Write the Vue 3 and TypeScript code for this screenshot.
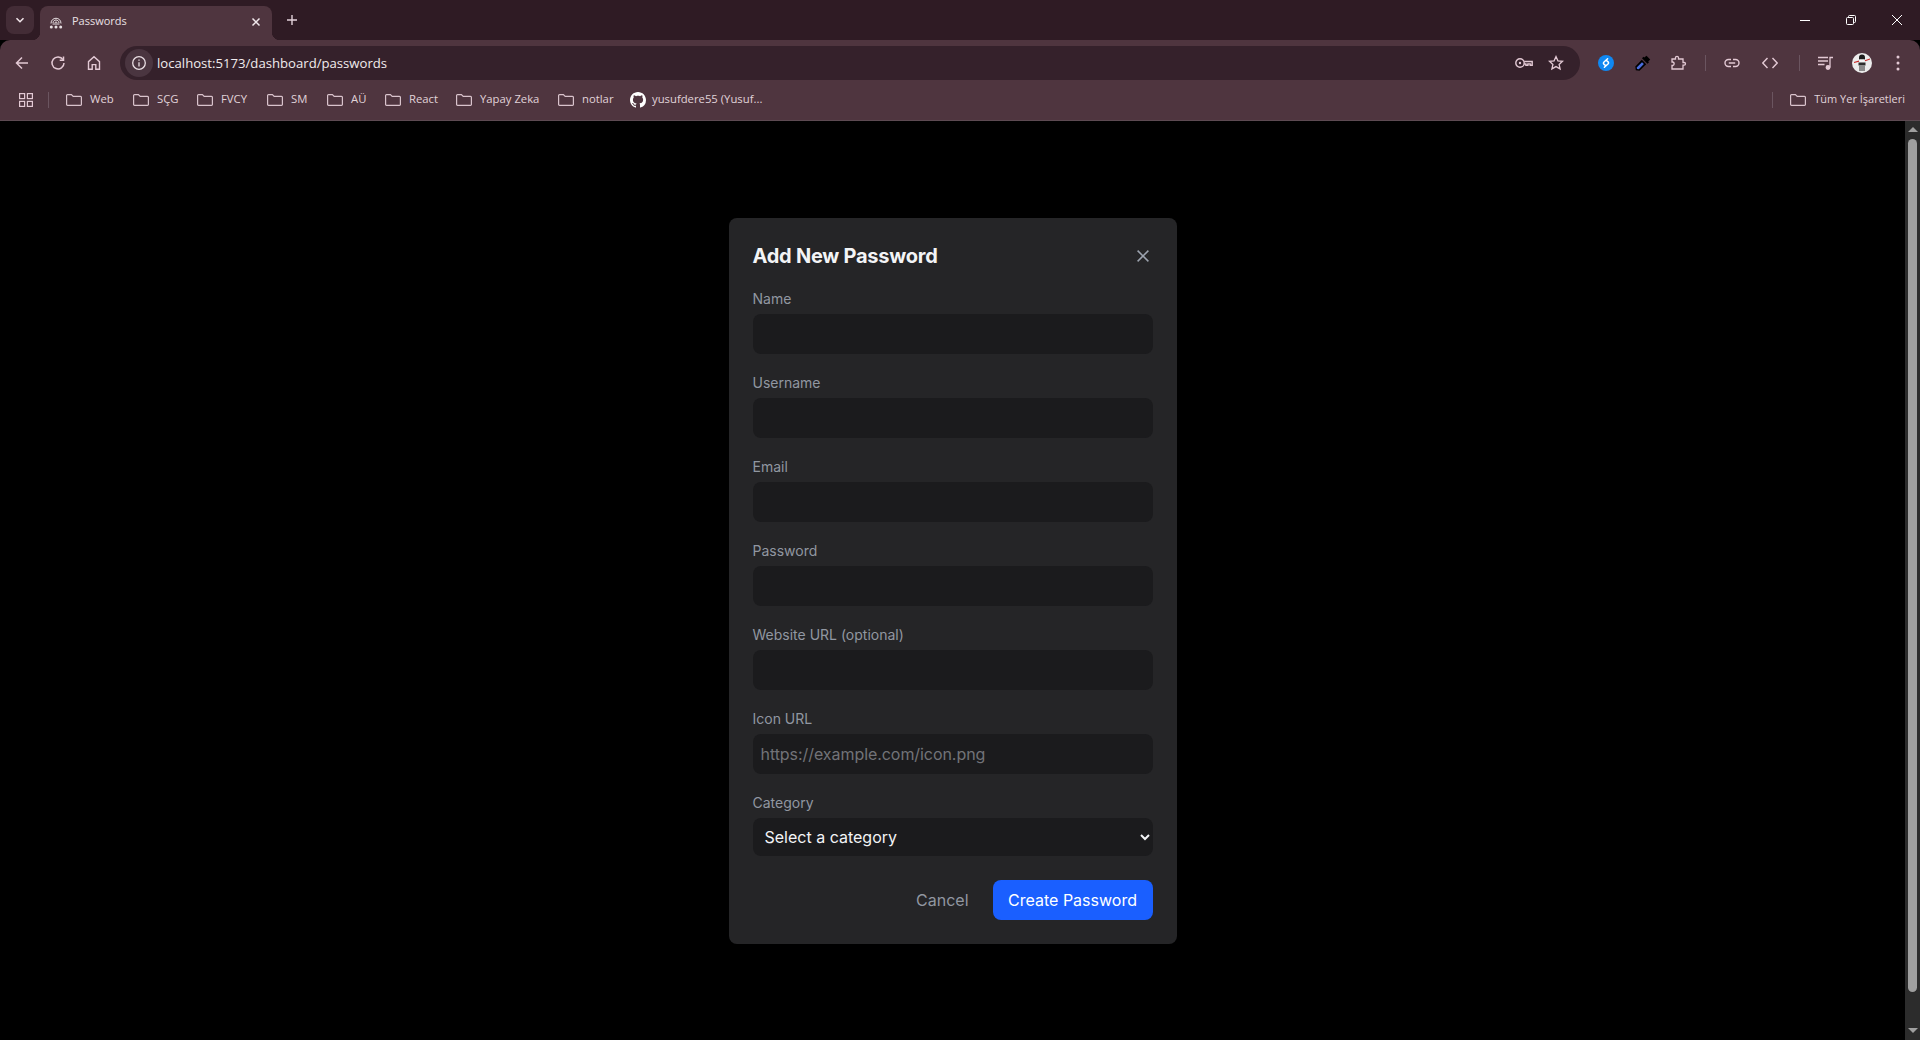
<script setup lang="ts">
interface Bookmark { label: string; width: number; github?: boolean }
const bookmarks: Bookmark[] = [
  { label: 'Web', width: 67 },
  { label: 'SÇG', width: 64 },
  { label: 'FVCY', width: 70 },
  { label: 'SM', width: 60 },
  { label: 'AÜ', width: 58 },
  { label: 'React', width: 71 },
  { label: 'Yapay Zeka', width: 102 },
  { label: 'notlar', width: 72 },
  { label: 'yusufdere55 (Yusuf...', width: 136, github: true },
]
const fields = [
  { label: 'Name', type: 'text', placeholder: '' },
  { label: 'Username', type: 'text', placeholder: '' },
  { label: 'Email', type: 'email', placeholder: '' },
  { label: 'Password', type: 'password', placeholder: '' },
  { label: 'Website URL (optional)', type: 'url', placeholder: '' },
  { label: 'Icon URL', type: 'url', placeholder: 'https://example.com/icon.png' },
]
</script>

<template>
  <div class="window">
    <div class="tabstrip">
      <button class="tab-search" aria-label="Tabs">
        <svg width="12" height="12" viewBox="0 0 12 12"><path d="M2.5 4.2 6 7.7l3.5-3.5" fill="none" stroke="#f0e4e9" stroke-width="1.6" /></svg>
      </button>
      <div class="tab">
        <svg class="favicon" width="16" height="16" viewBox="0 0 16 16" fill="none" stroke="#e8e0e3" stroke-width="1">
          <path d="M3 9.500C3 2.500 13 2.500 13 9.500" />
          <path d="M5 9C5 5 11 5 11 9" />
          <path d="M7 9C7 7.500 9 7.500 9 9" />
          <g fill="#e8e0e3" stroke="none"><circle cx="3.300" cy="13" r="1.500" /><circle cx="8" cy="13" r="1.500" /><circle cx="12.700" cy="13" r="1.500" /><rect x="4.500" y="9.500" width="7" height="1" /></g>
        </svg>
        <span class="tab-title">Passwords</span>
        <svg class="tab-close" width="10" height="10" viewBox="0 0 10 10"><path d="M1.500 1.500l7 7m0-7-7 7" stroke="#f2e9ed" stroke-width="1.500" /></svg>
      </div>
      <svg class="new-tab" width="12" height="12" viewBox="0 0 12 12"><path d="M6 1v10M1 6h10" stroke="#e3d2da" stroke-width="1.400" /></svg>
      <div class="window-controls">
        <svg width="10" height="10" viewBox="0 0 10 10"><path d="M0 5.500h10" stroke="#fff" /></svg>
        <svg width="10" height="10" viewBox="0 0 10 10" fill="none" stroke="#fff"><rect x=".5" y="2.500" width="7" height="7" rx="1" /><path d="M2.500 2.500v-1a1 1 0 0 1 1-1h5a1 1 0 0 1 1 1v5a1 1 0 0 1-1 1h-1" /></svg>
        <svg width="10" height="10" viewBox="0 0 10 10"><path d="M0 0l10 10m0-10L0 10" stroke="#fff" /></svg>
      </div>
    </div>

    <div class="toolbar-area">
      <div class="toolbar">
        <div class="nav-icons">
          <svg width="16" height="16" viewBox="0 0 16 16" fill="none" stroke="#e3c9d4" stroke-width="1.500"><path d="M14 8H2.500M8 2.500 2.500 8 8 13.500" /></svg>
          <svg width="16" height="16" viewBox="0 0 16 16" fill="none" stroke="#e3c9d4" stroke-width="1.500"><path d="M13 4.600A6 6 0 1 0 14 8" /><path d="M13.500 1.500v3.800H9.700" /></svg>
          <svg width="16" height="16" viewBox="0 0 16 16" fill="none" stroke="#e3c9d4" stroke-width="1.400"><path d="M2.500 14.200V6.600L8 1.800l5.500 4.800v7.600H9.800V9.600H6.200v4.600z" /></svg>
        </div>
        <div class="omnibox">
          <span class="info-chip">
            <svg width="16" height="16" viewBox="0 0 16 16" fill="none" stroke="#eadfe4" stroke-width="1.300"><circle cx="8" cy="8" r="6.300" /><path d="M8 7.200v4.300M8 4.400v1.400" /></svg>
          </span>
          <span class="url">localhost:5173/dashboard/passwords</span>
          <span class="omni-actions">
            <svg width="18" height="12" viewBox="0 0 18 12" fill="none" stroke="#e3c9d4" stroke-width="1.400"><circle cx="5" cy="6" r="4.200" /><circle cx="5" cy="6" r="1.200" fill="#e3c9d4" stroke="none" /><path d="M9.200 4.500h8v3.800h-2V6.900h-2.300v1.400h-2V7H9.200" /></svg>
            <svg width="16" height="16" viewBox="0 0 16 16" fill="none" stroke="#e3c9d4" stroke-width="1.300"><path d="m8 1.600 1.900 4.200 4.600.5-3.400 3.100 1 4.500L8 11.600l-4.100 2.300 1-4.500-3.400-3.100 4.600-.5z" /></svg>
          </span>
        </div>
        <div class="ext-icons">
          <svg class="i-shazam" width="16" height="16" viewBox="0 0 16 16"><circle cx="8" cy="8" r="8" fill="#0f88f2" /><path d="M9.600 3.800 5.800 7.200a1.300 1.300 0 0 0 .1 1.900l1.200 1M6.400 12.200l3.800-3.400a1.300 1.300 0 0 0-.1-1.900l-1.200-1" fill="none" stroke="#fff" stroke-width="1.500" stroke-linecap="round" /></svg>
          <svg class="i-drop" width="16" height="16" viewBox="0 0 16 16"><path d="M11.500.8l3.700 3.700-2 2 .8.8-1.500 1.500L7 3.300l1.500-1.500.8.8z" fill="#000" /><path d="M6.800 4.800 11.200 9.200 4.500 15.700.8 15.200.3 11.500z" fill="#000" /><path d="M7 7.200 8.900 9.100 3.800 14.200l-1.800-.2-.3-1.600z" fill="#4a6cdc" /></svg>
          <svg class="i-puzzle" width="16" height="16" viewBox="0 0 16 16" fill="none" stroke="#e3c9d4" stroke-width="1.300"><path d="M1 4h3.500V2.800a1.500 1.500 0 0 1 3 0V4H12v3.500h1.200a1.300 1.300 0 0 1 0 2.600H12V14H1v-3.500h.8a1.800 1.800 0 0 0 0-3.500H1z" /></svg>
          <span class="sep"></span>
          <svg class="i-link" width="16" height="16" viewBox="0 0 16 16" fill="none" stroke="#e3c9d4" stroke-width="1.400"><path d="M7 4.500H4.500a3.500 3.500 0 0 0 0 7H7M9 4.500h2.500a3.500 3.500 0 0 1 0 7H9M4.800 8h6.400" /></svg>
          <svg class="i-code" width="16" height="16" viewBox="0 0 16 16" fill="none" stroke="#e3c9d4" stroke-width="1.400"><path d="M5.500 3 .8 8l4.700 5M10.500 3l4.700 5-4.700 5" /></svg>
          <span class="sep sep-2"></span>
          <svg class="i-queue" width="16" height="16" viewBox="0 0 16 16" fill="none" stroke="#e3c9d4" stroke-width="1.300"><path d="M0 2.500h10M0 6h10M0 9.500h6.500" /><path d="M12 12.500V2.500h3" /><circle cx="10" cy="12.500" r="1.800" fill="#e3c9d4" /></svg>
          <svg class="i-avatar" width="20" height="20" viewBox="0 0 20 20">
            <circle cx="10" cy="10" r="10" fill="#ececec" />
            <path d="M7 6.500V4.500a3 3 0 0 1 6 0v2z" fill="#1c1c1c" />
            <rect x="7.500" y="6.500" width="5" height="2.500" fill="#f4f4f4" />
            <rect x="6.500" y="9.500" width="7" height="3" fill="#2b2b2b" />
            <rect x="7" y="12.500" width="6" height="5.500" fill="#8a8a8a" />
            <path d="M2 9.500 7 8.200M13 7.800l5-1.800" stroke="#c62828" stroke-width="1.200" />
          </svg>
          <svg class="i-menu" width="4" height="16" viewBox="0 0 4 16" fill="#e3c9d4"><circle cx="2" cy="2" r="1.500" /><circle cx="2" cy="8" r="1.500" /><circle cx="2" cy="14" r="1.500" /></svg>
        </div>
      </div>

      <div class="bookmarks">
        <svg class="apps" width="14" height="14" viewBox="0 0 14 14" fill="none" stroke="#e3c9d4" stroke-width="1.200"><rect x=".6" y=".6" width="5" height="5" /><rect x="8.400" y=".6" width="5" height="5" /><rect x=".6" y="8.400" width="5" height="5" /><rect x="8.400" y="8.400" width="5" height="5" /></svg>
        <span class="bm-sep"></span>
        <div v-for="b in bookmarks" :key="b.label" class="bookmark" :style="{ width: b.width + 'px' }">
          <svg v-if="b.github" class="bm-icon gh" width="16" height="16" viewBox="0 0 16 16" fill="#fff"><path d="M8 0C3.580 0 0 3.580 0 8c0 3.540 2.290 6.530 5.470 7.590.4.070.55-.17.55-.38 0-.19-.01-.82-.01-1.490-2.010.37-2.530-.49-2.690-.94-.09-.23-.48-.94-.82-1.130-.28-.15-.68-.52-.01-.53.630-.01 1.080.58 1.230.82.720 1.210 1.870.870 2.330.660.070-.520.280-.870.510-1.070-1.780-.2-3.640-.89-3.640-3.950 0-.870.310-1.590.820-2.150-.08-.2-.360-1.020.080-2.120 0 0 .670-.210 2.200.820.640-.180 1.320-.270 2-.270s1.360.090 2 .270c1.530-1.040 2.200-.820 2.200-.820.440 1.100.160 1.920.080 2.120.510.560.820 1.270.820 2.150 0 3.070-1.870 3.750-3.650 3.950.290.250.540.730.540 1.480 0 1.070-.010 1.930-.010 2.200 0 .210.150.460.550.380A8.010 8.010 0 0 0 16 8c0-4.420-3.580-8-8-8z" /></svg>
          <svg v-else class="bm-icon" width="16" height="16" viewBox="0 0 16 16" fill="none" stroke="#d9c3cc" stroke-width="1.200"><path d="M.6 3.500a.9.9 0 0 1 .9-.9h3.900l1.800 1.800h7.300a.9.9 0 0 1 .9.900v7.100a.9.900 0 0 1-.9.900H1.500a.9.900 0 0 1-.9-.9z" /></svg>
          <span class="bm-label">{{ b.label }}</span>
        </div>
        <span class="bm-spacer"></span>
        <span class="bm-sep"></span>
        <div class="bookmark all">
          <svg class="bm-icon" width="16" height="16" viewBox="0 0 16 16" fill="none" stroke="#d9c3cc" stroke-width="1.200"><path d="M.6 3.500a.9.9 0 0 1 .9-.9h3.900l1.800 1.800h7.300a.9.9 0 0 1 .9.900v7.100a.9.900 0 0 1-.9.900H1.500a.9.900 0 0 1-.9-.9z" /></svg>
          <span class="bm-label">Tüm Yer İşaretleri</span>
        </div>
      </div>
    </div>

    <div class="viewport">
      <main class="page">
        <form class="modal" @submit.prevent>
          <header class="modal-head">
            <h2>Add New Password</h2>
            <button type="button" class="close" aria-label="Close">
              <svg width="12" height="12" viewBox="0 0 12 12"><path d="M.6.6l10.800 10.800m0-10.800L.6 11.400" stroke="#9ca3af" stroke-width="1.500" /></svg>
            </button>
          </header>
          <div class="fields">
            <div v-for="f in fields" :key="f.label" class="field">
              <label>{{ f.label }}</label>
              <input :type="f.type" :placeholder="f.placeholder" />
            </div>
            <div class="field">
              <label>Category</label>
              <select><option>Select a category</option></select>
            </div>
          </div>
          <footer class="actions">
            <button type="button" class="cancel">Cancel</button>
            <button type="submit" class="create">Create Password</button>
          </footer>
        </form>
      </main>
      <div class="scrollbar">
        <span class="arrow up"></span>
        <span class="thumb"></span>
        <span class="arrow down"></span>
      </div>
    </div>
  </div>
</template>

<style>
html, body { margin: 0; height: 100%; overflow: hidden; background: #000; }
</style>

<style scoped>
.window { height: 100vh; display: flex; flex-direction: column; background: #000; font-family: "Open Sans", "Noto Sans", sans-serif; }
.tabstrip { height: 40px; flex: none; background: #2f1b24; display: flex; align-items: flex-start; position: relative; }
.tab-search { width: 28px; height: 28px; margin: 6px 0 0 6px; border: 0; padding: 0; border-radius: 8px; background: #432c36; display: flex; align-items: center; justify-content: center; }
.tab { width: 232px; height: 34px; margin: 6px 0 0 6px; box-sizing: border-box; padding: 0 10px 0 8px; background: #4f353f; border-radius: 8px 8px 0 0; display: flex; align-items: center; position: relative; z-index: 1; }
.tab::before, .tab::after { content: ""; position: absolute; bottom: 0; width: 8px; height: 8px; }
.tab::before { left: -8px; background: radial-gradient(circle at 0 0, transparent 8px, #4f353f 8.5px); }
.tab::after { right: -8px; background: radial-gradient(circle at 100% 0, transparent 8px, #4f353f 8.5px); }
.favicon { margin-top: -2px; }
.tab-title { margin-left: 8px; font-size: 11px; line-height: 16px; color: #e9e0e4; flex: 1; margin-top: -4px; }
.tab-close { margin: -2px 1px 0 0; }
.new-tab { margin: 14px 0 0 14px; }
.window-controls { margin-left: auto; display: flex; gap: 36px; padding: 15px 18px 0 0; }
.toolbar-area { flex: none; height: 81px; background: #4f353f; border-radius: 10px 10px 0 0; box-sizing: border-box; display: flex; flex-direction: column; box-shadow: inset 0 -1px 0 #5d4a52; }
.toolbar { height: 46px; flex: none; display: flex; align-items: center; box-sizing: border-box; }
.nav-icons { width: 120px; flex: none; display: flex; gap: 20px; padding-left: 14px; box-sizing: border-box; }
.omnibox { width: 1460px; height: 34px; flex: none; border-radius: 17px; background: #35212b; display: flex; align-items: center; box-sizing: border-box; padding-left: 5px; }
.info-chip { width: 28px; height: 28px; border-radius: 50%; background: #4a3540; display: flex; align-items: center; justify-content: center; flex: none; }
.url { margin-left: 4px; font-size: 13.15px; color: #f1ecee; }
.omni-actions { margin-left: auto; display: flex; align-items: center; gap: 15px; padding-right: 16px; }
.ext-icons { flex: 1; display: flex; align-items: center; padding-left: 18px; }
.ext-icons svg { flex: none; }
.i-drop { margin-left: 21px; }
.i-puzzle { margin-left: 20px; }
.sep { width: 1px; height: 16px; background: #6b5560; margin-left: 18px; flex: none; }
.i-link { margin-left: 18px; }
.i-code { margin-left: 22px; }
.sep-2 { margin-left: 21px; }
.i-queue { margin-left: 18px; }
.i-avatar { margin-left: 18px; }
.i-menu { margin-left: 24px; }
.bookmarks { flex: 1; display: flex; align-items: center; padding: 0 15px 7px 19px; }
.apps { flex: none; }
.bm-sep { width: 1px; height: 16px; background: #6b5560; margin: 0 17px 0 15px; flex: none; }
.bookmark { display: flex; align-items: center; gap: 8px; flex: none; }
.bm-label { font-size: 11.3px; line-height: 16px; color: #e0d3d9; white-space: nowrap; margin-top: -2px; }
.bm-icon { flex: none; }
.gh { margin-right: -2px; }
.bm-spacer { flex: 1; }
.all .bm-label { font-size: 11px; }
.viewport { flex: 1; min-height: 0; display: flex; }
.page { flex: 1; display: flex; align-items: center; justify-content: center; background: #000; }
.modal { width: 448px; box-sizing: border-box; padding: 24px; background: #252527; border-radius: 8px; font-family: Inter, sans-serif; }
.modal-head { display: flex; align-items: center; justify-content: space-between; height: 28px; margin-bottom: 19px; }
.modal-head h2 { margin: 0; font-size: 20px; line-height: 28px; font-weight: 700; letter-spacing: -0.25px; color: #f3f4f6; }
.close { border: 0; background: none; padding: 0; margin-right: 4px; display: flex; }
.fields { display: flex; flex-direction: column; gap: 19px; }
.field { display: flex; flex-direction: column; gap: 5px; }
.field label { font-size: 14px; line-height: 20px; color: #9197a1; }
.field input { height: 40px; box-sizing: border-box; border: 0; outline: 0; padding: 0 8px; border-radius: 8px; background: #1b1b1d; font: 16px Inter, sans-serif; letter-spacing: -0.06px; color: #e5e7eb; }
.field input::placeholder { color: #727378; }
.field select { height: 38px; box-sizing: border-box; border: 0; outline: 0; padding: 0 8px; border-radius: 8px; background: #1b1b1d; font: 16px Inter, sans-serif; color: #f3f4f6; color-scheme: dark; }
.actions { display: flex; justify-content: flex-end; align-items: center; gap: 24px; margin-top: 24px; }
.actions button { border: 0; font: 400 16px Inter, sans-serif; }
.cancel { background: none; color: #9197a1; padding: 0; }
.create { width: 160px; height: 40px; background: #1a5fff; color: #fff; border-radius: 8px; padding: 0; }
.scrollbar { width: 15px; flex: none; background: #2c2c2c; display: flex; flex-direction: column; align-items: center; box-sizing: border-box; padding: 6px 0 7px; }
.arrow { width: 0; height: 0; border-left: 5px solid transparent; border-right: 5px solid transparent; flex: none; }
.arrow.up { border-bottom: 5px solid #a0a0a0; }
.arrow.down { border-top: 5px solid #a0a0a0; }
.thumb { width: 9px; flex: 1; margin: 7px 0 36px; background: #9f9f9f; border-radius: 5px; }
</style>
